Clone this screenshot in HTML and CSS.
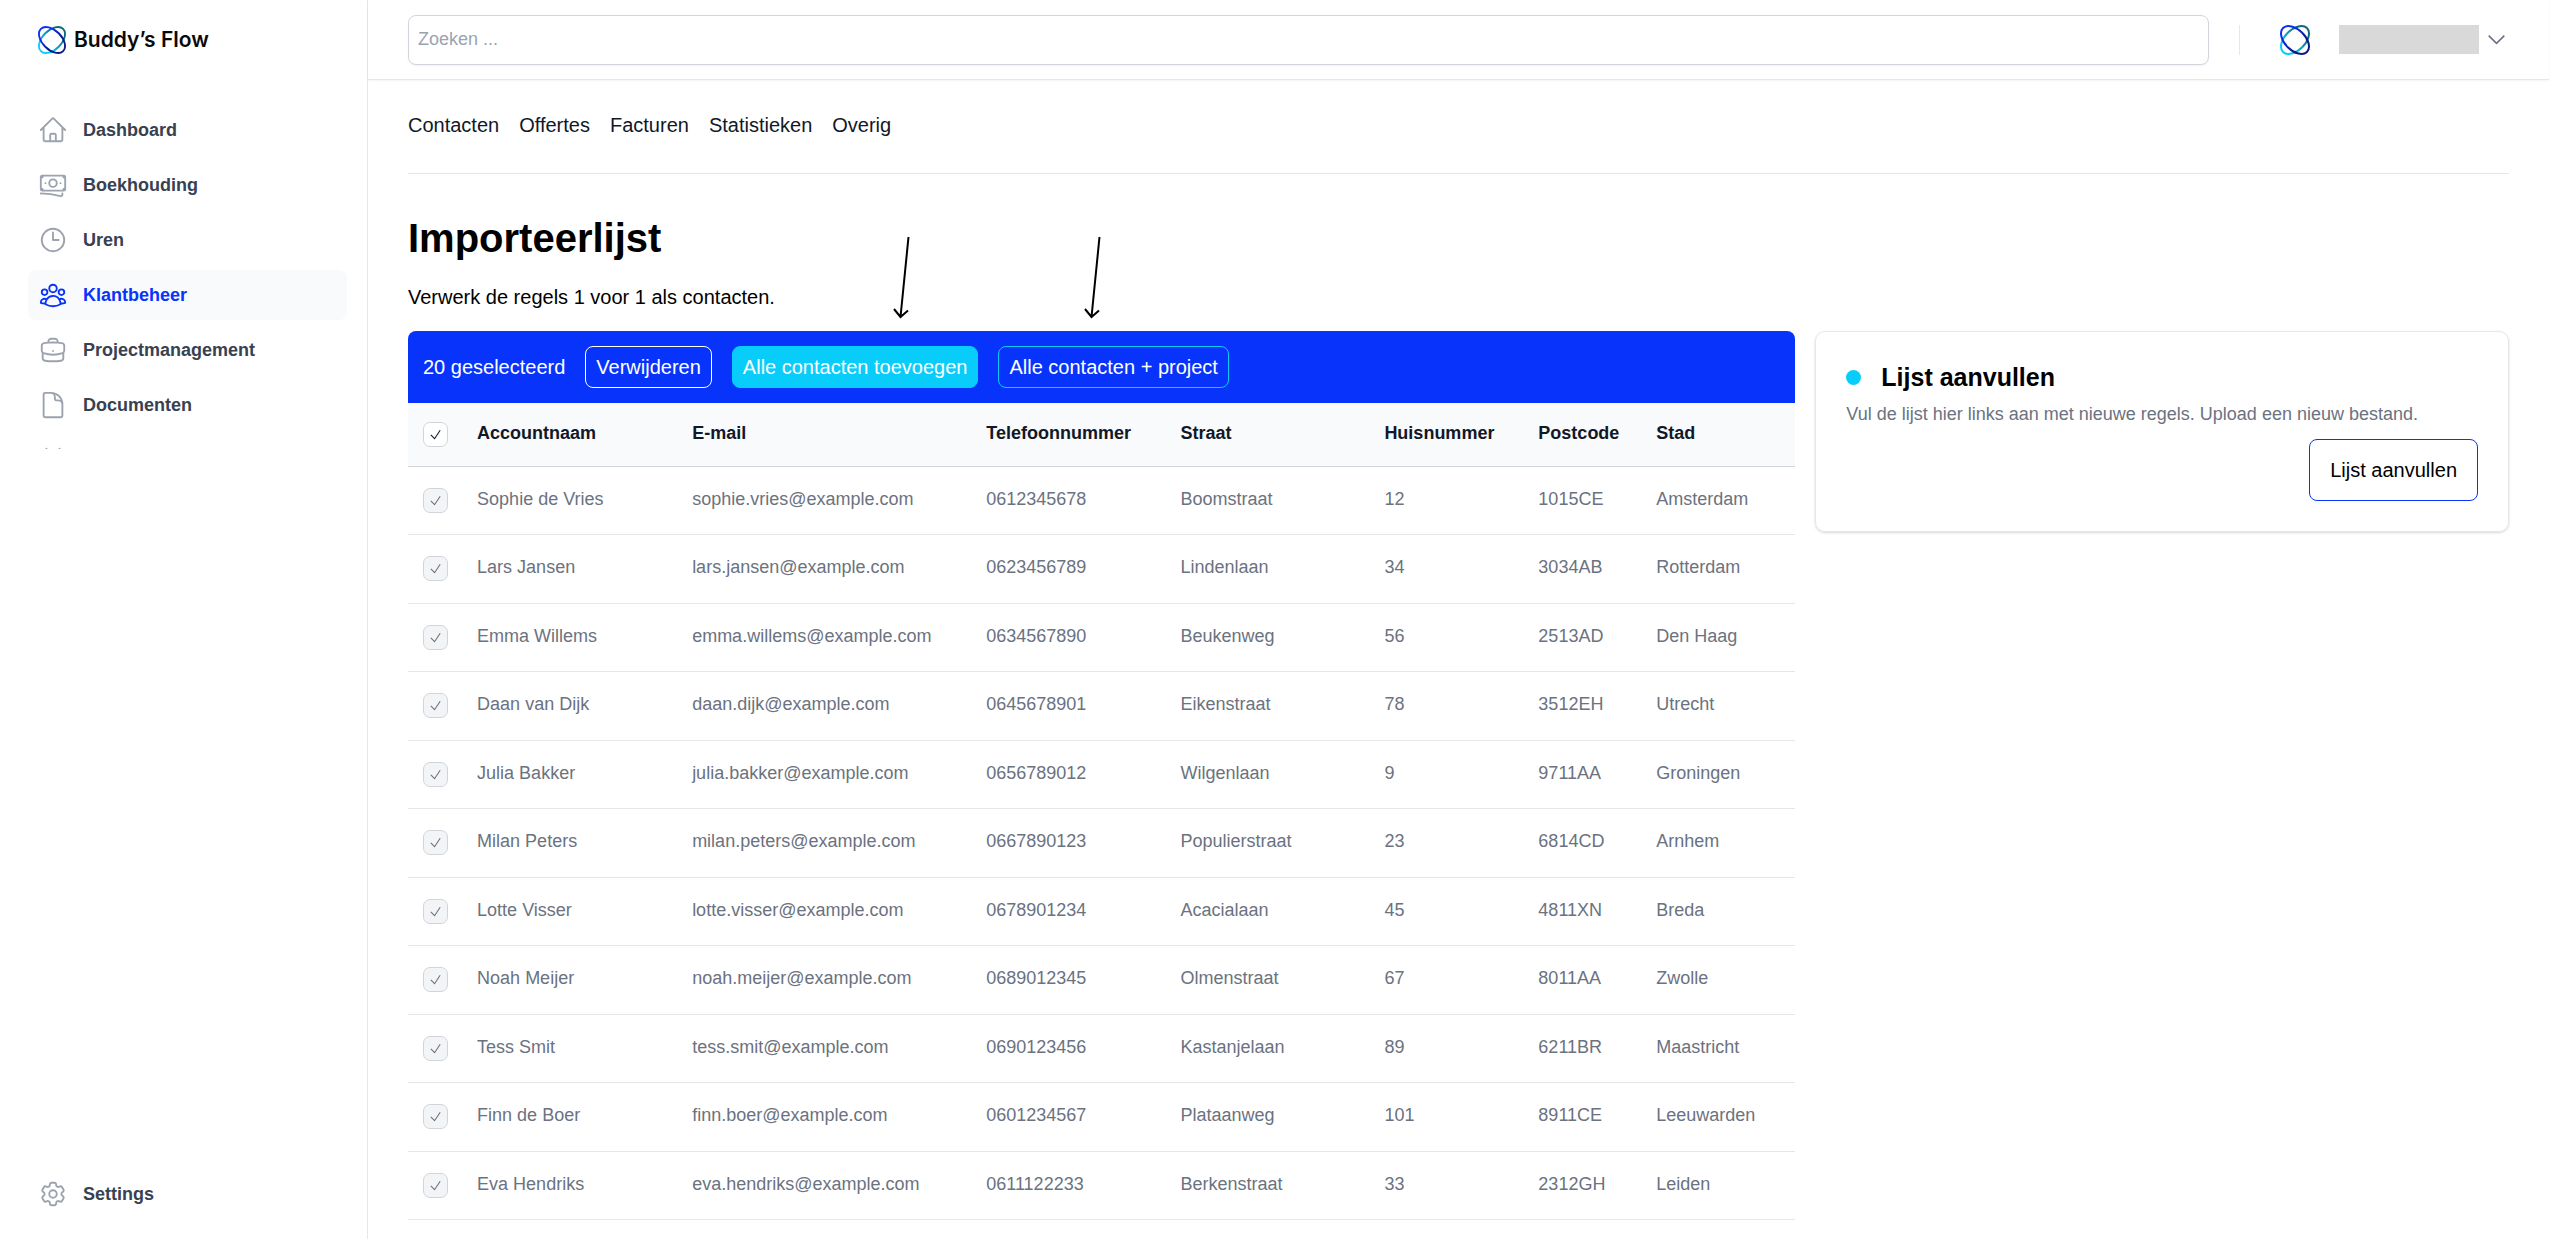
FILE: index.html
```html
<!DOCTYPE html>
<html lang="nl">
  <head>
    <meta charset="UTF-8" />
    <meta name="viewport" content="width=device-width, initial-scale=1.0" />
    <title>Importeerlijst</title>
    <link rel="stylesheet" href="styles.css">
  </head>
  <body>
    <!-- Shared shapes -->
    <svg class="defs" width="0" height="0">
      <defs>
        <linearGradient id="ring-blue" x1="0" y1="0" x2="1" y2="0">
          <stop offset="0.2" stop-color="#0a30f5" />
          <stop offset="0.7" stop-color="#0a1a80" />
        </linearGradient>
        <linearGradient id="ring-cyan" x1="0" y1="0" x2="1" y2="0">
          <stop offset="0.2" stop-color="#08cdfb" />
          <stop offset="0.8" stop-color="#0a6a7c" />
        </linearGradient>
        <symbol id="logo" viewBox="0 0 30 30">
          <g fill="none" stroke-width="2">
            <ellipse cx="15" cy="15" rx="16.9" ry="10.2" transform="rotate(-45 15 15)" stroke="url(#ring-cyan)" />
            <ellipse cx="15" cy="15" rx="16.9" ry="10.2" transform="rotate(45 15 15)" stroke="url(#ring-blue)" />
          </g>
        </symbol>
        <symbol id="arrow" viewBox="0 0 18 82">
          <path fill="none" stroke="#000" stroke-width="2" d="M15.5 0L7.5 80M1 72L7.5 80L15 73.5" />
        </symbol>
      </defs>
    </svg>

    <aside class="sidebar">
      <a class="brand" href="#">
        <svg class="brand-logo"><use href="#logo" /></svg>
        Buddy’s Flow
      </a>
      <nav class="side-nav">
        <a class="side-link" href="#">
          <svg class="icon" viewBox="0 0 24 24"><path d="M2.25 12l8.954-8.955c.44-.439 1.152-.439 1.591 0L21.75 12M4.5 9.75v10.125c0 .621.504 1.125 1.125 1.125H9.75v-4.875c0-.621.504-1.125 1.125-1.125h2.25c.621 0 1.125.504 1.125 1.125V21h4.125c.621 0 1.125-.504 1.125-1.125V9.75M8.25 21h8.25" /></svg>
          Dashboard
        </a>
        <a class="side-link" href="#">
          <svg class="icon" viewBox="0 0 24 24"><path d="M2.25 18.75a60.07 60.07 0 0115.797 2.101c.727.198 1.453-.342 1.453-1.096V18.75M3.75 4.5v.75A.75.75 0 013 6h-.75m0 0v-.375c0-.621.504-1.125 1.125-1.125H20.25M2.25 6v9m18-10.5v.75c0 .414.336.75.75.75h.75m-1.5-1.5h.375c.621 0 1.125.504 1.125 1.125v9.75c0 .621-.504 1.125-1.125 1.125h-.375m1.5-1.5H21a.75.75 0 00-.75.75v.75m0 0H3.75m0 0h-.375a1.125 1.125 0 01-1.125-1.125V15m1.5 1.5v-.75A.75.75 0 003 15h-.75M15 10.5a3 3 0 11-6 0 3 3 0 016 0zm3 0h.008v.008H18V10.5zm-12 0h.008v.008H6V10.5z" /></svg>
          Boekhouding
        </a>
        <a class="side-link" href="#">
          <svg class="icon" viewBox="0 0 24 24"><path d="M12 6v6h4.5m4.5 0a9 9 0 11-18 0 9 9 0 0118 0z" /></svg>
          Uren
        </a>
        <a class="side-link active" href="#">
          <svg class="icon" viewBox="0 0 24 24"><path d="M18 18.72a9.094 9.094 0 003.741-.479 3 3 0 00-4.682-2.72m.94 3.198l.001.031c0 .225-.012.447-.037.666A11.944 11.944 0 0112 21c-2.17 0-4.207-.576-5.963-1.584A6.062 6.062 0 016 18.719m12 0a5.971 5.971 0 00-.941-3.197m0 0A5.995 5.995 0 0012 12.75a5.995 5.995 0 00-5.058 2.772m0 0a3 3 0 00-4.681 2.72 8.986 8.986 0 003.74.477m.94-3.197a5.971 5.971 0 00-.94 3.197M15 6.75a3 3 0 11-6 0 3 3 0 016 0zm6 3a2.25 2.25 0 11-4.5 0 2.25 2.25 0 014.5 0zm-13.5 0a2.25 2.25 0 11-4.5 0 2.25 2.25 0 014.5 0z" /></svg>
          Klantbeheer
        </a>
        <a class="side-link" href="#">
          <svg class="icon" viewBox="0 0 24 24"><path d="M20.25 14.15v4.25c0 1.094-.787 2.036-1.872 2.18-2.087.277-4.216.42-6.378.42s-4.291-.143-6.378-.42c-1.085-.144-1.872-1.086-1.872-2.18v-4.25m16.5 0a2.18 2.18 0 00.75-1.661V8.706c0-1.081-.768-2.015-1.837-2.175a48.114 48.114 0 00-3.413-.387m4.5 8.006c-.194.165-.42.295-.673.38A23.978 23.978 0 0112 15.75c-2.648 0-5.195-.429-7.577-1.22a2.016 2.016 0 01-.673-.38m0 0A2.18 2.18 0 013 12.489V8.706c0-1.081.768-2.015 1.837-2.175a48.111 48.111 0 013.413-.387m7.5 0V5.25A2.25 2.25 0 0013.5 3h-3a2.25 2.25 0 00-2.25 2.25v.894m7.5 0a48.667 48.667 0 00-7.5 0M12 12.75h.008v.008H12v-.008z" /></svg>
          Projectmanagement
        </a>
        <a class="side-link" href="#">
          <svg class="icon" viewBox="0 0 24 24"><path d="M19.5 14.25v-2.625a3.375 3.375 0 00-3.375-3.375h-1.5A1.125 1.125 0 0113.5 7.125v-1.5a3.375 3.375 0 00-3.375-3.375H8.25m2.25 0H5.625c-.621 0-1.125.504-1.125 1.125v17.25c0 .621.504 1.125 1.125 1.125h12.75c.621 0 1.125-.504 1.125-1.125V11.25a9 9 0 00-9-9z" /></svg>
          Documenten
        </a>
        <span class="side-link">
          <svg class="icon" viewBox="0 0 24 24"><path d="M6.75 3v2.25M17.25 3v2.25" /></svg>
        </span>
      </nav>
      <a class="side-link settings" href="#">
        <svg class="icon" viewBox="0 0 24 24"><path d="M9.594 3.94c.09-.542.56-.94 1.11-.94h2.593c.55 0 1.02.398 1.11.94l.213 1.281c.063.374.313.686.645.87.074.04.147.083.22.127.324.196.72.257 1.075.124l1.217-.456a1.125 1.125 0 011.37.49l1.296 2.247a1.125 1.125 0 01-.26 1.431l-1.003.827c-.293.24-.438.613-.431.992a6.759 6.759 0 010 .255c-.007.378.138.75.43.99l1.005.828c.424.35.534.954.26 1.43l-1.298 2.247a1.125 1.125 0 01-1.369.491l-1.217-.456c-.355-.133-.75-.072-1.076.124a6.57 6.57 0 01-.22.128c-.331.183-.581.495-.644.869l-.213 1.28c-.09.543-.56.941-1.11.941h-2.594c-.55 0-1.02-.398-1.11-.94l-.213-1.281c-.062-.374-.312-.686-.644-.87a6.52 6.52 0 01-.22-.127c-.325-.196-.72-.257-1.076-.124l-1.217.456a1.125 1.125 0 01-1.369-.49l-1.297-2.247a1.125 1.125 0 01.26-1.431l1.004-.827c.292-.24.437-.613.43-.992a6.932 6.932 0 010-.255c.007-.378-.138-.75-.43-.99l-1.004-.828a1.125 1.125 0 01-.26-1.43l1.297-2.247a1.125 1.125 0 011.37-.491l1.216.456c.356.133.751.072 1.076-.124.072-.044.146-.087.22-.128.332-.183.582-.495.644-.869l.214-1.281zM15 12a3 3 0 11-6 0 3 3 0 016 0z" /></svg>
        Settings
      </a>
    </aside>

    <div class="page">
      <header class="topbar">
        <input class="search" type="search" placeholder="Zoeken ..." aria-label="Zoeken" />
        <div class="divider"></div>
        <button class="account" type="button" aria-label="Account">
          <svg class="avatar"><use href="#logo" /></svg>
          <span class="account-name"></span>
          <svg class="chevron" viewBox="0 0 24 24"><path d="M19.5 8.25l-7.5 7.5-7.5-7.5" /></svg>
        </button>
      </header>

      <main class="content">
        <nav class="tabs">
          <a href="#">Contacten</a>
          <a href="#">Offertes</a>
          <a href="#">Facturen</a>
          <a href="#">Statistieken</a>
          <a href="#">Overig</a>
        </nav>

        <h1>Importeerlijst</h1>
        <p class="intro">Verwerk de regels 1 voor 1 als contacten.</p>

        <div class="columns">
          <section class="list">
            <div class="bulk-bar">
              <span>20 geselecteerd</span>
              <button class="bulk-btn" type="button">Verwijderen</button>
              <div class="bulk-item">
                <button class="bulk-btn filled" type="button">Alle contacten toevoegen</button>
                <svg class="arrow arrow-add"><use href="#arrow" /></svg>
              </div>
              <div class="bulk-item">
                <button class="bulk-btn outlined" type="button">Alle contacten + project</button>
                <svg class="arrow arrow-project"><use href="#arrow" /></svg>
              </div>
            </div>
            <table class="contacts">
              <colgroup>
                <col class="col-check" />
                <col class="col-name" />
                <col class="col-email" />
                <col class="col-phone" />
                <col class="col-street" />
                <col class="col-number" />
                <col class="col-zip" />
                <col class="col-city" />
              </colgroup>
              <thead>
                <tr>
                  <th class="check"><input type="checkbox" checked aria-label="Accountnaam" /></th>
                  <th>Accountnaam</th>
                  <th>E-mail</th>
                  <th>Telefoonnummer</th>
                  <th>Straat</th>
                  <th>Huisnummer</th>
                  <th>Postcode</th>
                  <th>Stad</th>
                </tr>
              </thead>
              <tbody>
                <tr>
                  <td class="check"><input type="checkbox" checked disabled aria-label="Sophie de Vries" /></td>
                  <td>Sophie de Vries</td><td>sophie.vries@example.com</td><td>0612345678</td><td>Boomstraat</td><td>12</td><td>1015CE</td><td>Amsterdam</td>
                </tr>
                <tr>
                  <td class="check"><input type="checkbox" checked disabled aria-label="Lars Jansen" /></td>
                  <td>Lars Jansen</td><td>lars.jansen@example.com</td><td>0623456789</td><td>Lindenlaan</td><td>34</td><td>3034AB</td><td>Rotterdam</td>
                </tr>
                <tr>
                  <td class="check"><input type="checkbox" checked disabled aria-label="Emma Willems" /></td>
                  <td>Emma Willems</td><td>emma.willems@example.com</td><td>0634567890</td><td>Beukenweg</td><td>56</td><td>2513AD</td><td>Den Haag</td>
                </tr>
                <tr>
                  <td class="check"><input type="checkbox" checked disabled aria-label="Daan van Dijk" /></td>
                  <td>Daan van Dijk</td><td>daan.dijk@example.com</td><td>0645678901</td><td>Eikenstraat</td><td>78</td><td>3512EH</td><td>Utrecht</td>
                </tr>
                <tr>
                  <td class="check"><input type="checkbox" checked disabled aria-label="Julia Bakker" /></td>
                  <td>Julia Bakker</td><td>julia.bakker@example.com</td><td>0656789012</td><td>Wilgenlaan</td><td>9</td><td>9711AA</td><td>Groningen</td>
                </tr>
                <tr>
                  <td class="check"><input type="checkbox" checked disabled aria-label="Milan Peters" /></td>
                  <td>Milan Peters</td><td>milan.peters@example.com</td><td>0667890123</td><td>Populierstraat</td><td>23</td><td>6814CD</td><td>Arnhem</td>
                </tr>
                <tr>
                  <td class="check"><input type="checkbox" checked disabled aria-label="Lotte Visser" /></td>
                  <td>Lotte Visser</td><td>lotte.visser@example.com</td><td>0678901234</td><td>Acacialaan</td><td>45</td><td>4811XN</td><td>Breda</td>
                </tr>
                <tr>
                  <td class="check"><input type="checkbox" checked disabled aria-label="Noah Meijer" /></td>
                  <td>Noah Meijer</td><td>noah.meijer@example.com</td><td>0689012345</td><td>Olmenstraat</td><td>67</td><td>8011AA</td><td>Zwolle</td>
                </tr>
                <tr>
                  <td class="check"><input type="checkbox" checked disabled aria-label="Tess Smit" /></td>
                  <td>Tess Smit</td><td>tess.smit@example.com</td><td>0690123456</td><td>Kastanjelaan</td><td>89</td><td>6211BR</td><td>Maastricht</td>
                </tr>
                <tr>
                  <td class="check"><input type="checkbox" checked disabled aria-label="Finn de Boer" /></td>
                  <td>Finn de Boer</td><td>finn.boer@example.com</td><td>0601234567</td><td>Plataanweg</td><td>101</td><td>8911CE</td><td>Leeuwarden</td>
                </tr>
                <tr>
                  <td class="check"><input type="checkbox" checked disabled aria-label="Eva Hendriks" /></td>
                  <td>Eva Hendriks</td><td>eva.hendriks@example.com</td><td>0611122233</td><td>Berkenstraat</td><td>33</td><td>2312GH</td><td>Leiden</td>
                </tr>
              </tbody>
            </table>
          </section>

          <section class="card">
            <h2><span class="dot"></span>Lijst aanvullen</h2>
            <p>Vul de lijst hier links aan met nieuwe regels. Upload een nieuw bestand.</p>
            <button class="card-btn" type="button">Lijst aanvullen</button>
          </section>
        </div>
      </main>
    </div>
  </body>
</html>
```
FILE: styles.css
```css
/* Layout */
* {
  box-sizing: border-box;
}
body {
  margin: 0;
  height: 100vh;
  display: flex;
  overflow: hidden;
  background: #fff;
  color: #000;
  font-family: Arial, "Liberation Sans", sans-serif;
  font-size: 20px;
  line-height: 30px;
}
a {
  color: inherit;
  text-decoration: none;
}
button,
input {
  font: inherit;
}
.defs {
  position: absolute;
}
.page {
  flex: 1;
  min-width: 0;
  padding-right: 9px;
}
.content {
  padding: 0 40px;
}

/* Sidebar */
.sidebar {
  width: 368px;
  flex-shrink: 0;
  display: flex;
  flex-direction: column;
  padding: 0 20px 20px 28px;
  border-right: 1px solid #e5e7eb;
}
.brand {
  display: flex;
  align-items: center;
  gap: 8px;
  height: 80px;
  margin-bottom: 25px;
  padding-left: 10px;
  font-family: Inter, sans-serif;
  font-size: 21px;
  font-weight: 600;
  color: #0a0a0a;
}
.brand-logo {
  width: 28px;
  height: 28px;
}
.side-nav {
  display: flex;
  flex-direction: column;
  gap: 5px;
  height: 344px;
  overflow: hidden;
}
.side-link {
  display: flex;
  align-items: center;
  flex-shrink: 0;
  gap: 15px;
  height: 50px;
  padding: 0 10px;
  border-radius: 8px;
  font-size: 18px;
  font-weight: bold;
  color: #374151;
}
.side-link.active {
  background: #f9fafb;
  color: #0833fb;
}
.settings {
  margin-top: auto;
}
.icon {
  width: 30px;
  height: 30px;
  fill: none;
  stroke: #9ca3af;
  stroke-width: 1.5;
  stroke-linecap: round;
  stroke-linejoin: round;
}
.active .icon {
  stroke: #0833fb;
}

/* Top bar */
.topbar {
  display: flex;
  align-items: center;
  height: 80px;
  padding: 0 40px;
  border-bottom: 1px solid #e5e7eb;
  box-shadow: 0 1px 2px rgba(0, 0, 0, 0.05);
}
.search {
  flex: 1;
  height: 50px;
  padding: 0 9px;
  border: 1px solid #d1d5db;
  border-radius: 8px;
  box-shadow: 0 1px 2px rgba(0, 0, 0, 0.05);
  font-size: 18px;
  appearance: none;
}
.search::placeholder {
  color: #9ca3af;
}
.divider {
  width: 1px;
  height: 30px;
  margin: 0 40px 0 30px;
  background: #e5e7eb;
}
.account {
  display: flex;
  align-items: center;
  padding: 0;
  border: none;
  background: none;
}
.avatar {
  width: 30px;
  height: 30px;
}
.account-name {
  width: 140px;
  height: 29px;
  margin: 0 5px 0 29px;
  background: #d9d9d9;
}
.chevron {
  width: 25px;
  height: 25px;
  fill: none;
  stroke: #6b7280;
  stroke-width: 1.5;
}

/* Tabs */
.tabs {
  display: flex;
  gap: 20px;
  padding: 30px 0 33px;
  border-bottom: 1px solid #e5e7eb;
  color: #111827;
}

/* Headings */
h1 {
  margin: 39px 0 0;
  font-size: 40px;
  line-height: 50px;
}
.intro {
  margin: 19px 0;
}

/* List */
.columns {
  display: grid;
  grid-template-columns: 2fr 1fr;
  gap: 20px;
  align-items: start;
}
.bulk-bar {
  display: flex;
  align-items: center;
  gap: 20px;
  padding: 15px;
  border-radius: 8px 8px 0 0;
  background: #0833fb;
  color: #fff;
}
.bulk-item {
  position: relative;
  display: flex;
}
.bulk-btn {
  padding: 5px 10px;
  border: 1px solid #fff;
  border-radius: 8px;
  background: none;
  color: #fff;
}
.bulk-btn.filled {
  border-color: #08cdfb;
  background: #08cdfb;
}
.bulk-btn.outlined {
  border-color: #08cdfb;
}
.arrow {
  position: absolute;
  bottom: 69px;
  width: 18px;
  height: 82px;
}
.arrow-add {
  left: 161px;
}
.arrow-project {
  left: 86px;
}

/* Table */
.contacts {
  width: 100%;
  table-layout: fixed;
  border-spacing: 0;
  font-size: 18px;
  line-height: 1.25;
}
.col-check { width: 3.9%; }
.col-name { width: 15.5%; }
.col-email { width: 21.2%; }
.col-phone { width: 14%; }
.col-street { width: 14.7%; }
.col-number { width: 11.1%; }
.col-zip { width: 8.5%; }
.contacts th {
  padding: 19px 0 21px 15px;
  border-bottom: 1px solid #d1d5db;
  background: #f9fafb;
  color: #111827;
  text-align: left;
}
.contacts td {
  padding: 21px 0 24px 15px;
  border-bottom: 1px solid #e5e7eb;
  color: #6b7280;
}
.contacts .check {
  padding-top: 0;
  padding-bottom: 0;
}
.check input {
  display: block;
  width: 25px;
  height: 25px;
  margin: 0;
  appearance: none;
  border: 1px solid #d1d5db;
  border-radius: 7px;
  background: #fff url("data:image/svg+xml,%3Csvg xmlns='http://www.w3.org/2000/svg' viewBox='0 0 24 24' fill='none' stroke='%23111827' stroke-width='1.8'%3E%3Cpath d='M4.5 12.75l6 6 9-13.5'/%3E%3C/svg%3E") center / 15px no-repeat;
}
.check input:disabled {
  background-color: #f3f4f6;
  background-image: url("data:image/svg+xml,%3Csvg xmlns='http://www.w3.org/2000/svg' viewBox='0 0 24 24' fill='none' stroke='%236b7280' stroke-width='1.8'%3E%3Cpath d='M4.5 12.75l6 6 9-13.5'/%3E%3C/svg%3E");
}

/* Card */
.card {
  display: flex;
  flex-direction: column;
  padding: 30px;
  border: 1px solid #e5e7eb;
  border-radius: 10px;
  box-shadow: 0 1px 3px rgba(0, 0, 0, 0.1), 0 1px 2px rgba(0, 0, 0, 0.06);
}
.card h2 {
  display: flex;
  align-items: center;
  gap: 20px;
  margin: 0 0 10px;
  font-size: 25px;
  line-height: 30px;
}
.dot {
  width: 15px;
  height: 15px;
  border-radius: 50%;
  background: #08cdfb;
}
.card p {
  margin: 0 0 12px;
  font-size: 18px;
  line-height: 25px;
  color: #6b7280;
}
.card-btn {
  align-self: flex-end;
  padding: 15px 20px;
  border: 1px solid #0833fb;
  border-radius: 8px;
  background: #fff;
  color: #000;
}
```
